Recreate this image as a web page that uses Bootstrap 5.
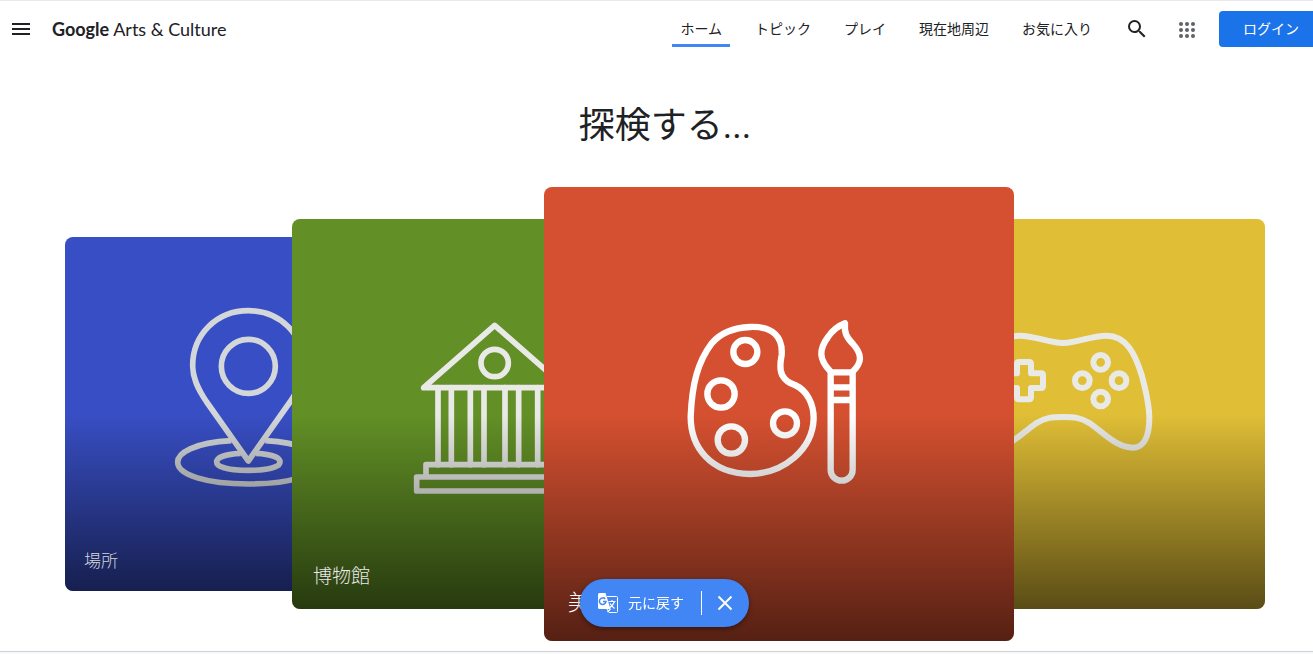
<!DOCTYPE html>
<html lang="ja">
<head>
<meta charset="utf-8">
<meta name="viewport" content="width=device-width, initial-scale=1">
<title>Google Arts &amp; Culture</title>
<link href="https://cdn.jsdelivr.net/npm/bootstrap@5.3.0/dist/css/bootstrap.min.css" rel="stylesheet">
<style>
  body { font-family: Roboto, "Noto Sans CJK JP", sans-serif; color: #202124; background: #fff; overflow-x: hidden; }
  .topbar { border-top: 1px solid #e8e8e8; height: 57px; }
  .icon-btn { width: 40px; height: 40px; color: #202124; border: 0; }
  .menu-btn { width: 42px; }
  .brand { font-family: Lato, sans-serif; font-size: 18px; line-height: 24px; color: #202124; margin-left: 10px; }
  .brand b { font-weight: 700; }
  .main-menu { gap: 17px; margin-right: 17px; }
  .main-menu .nav-link { font-size: 14px; line-height: 20px; font-weight: 400; color: #202124; padding: 8px 8px 5px; border-bottom: 3px solid transparent; white-space: nowrap; }
  .main-menu .nav-link.active { border-bottom-color: #4285f4; }
  .apps-btn { margin: 0 12px 0 10px; }
  .login { background: #1a73e8; color: #fff; font-size: 14px; line-height: 20px; padding: 8px 14px 8px 24px; border: 0; border-radius: 4px 0 0 4px; white-space: nowrap; }
  .login:hover { background: #1765cc; color: #fff; }
  .stage { padding: 45px 48px 10px 65px; }
  .stage h1 { font-size: 36px; line-height: 48px; font-weight: 400; margin-bottom: 37px; }
  /* The column lines are the edges of the overlapping cards. */
  .deck { display: grid; align-items: center; grid-template-columns: 227fr 139fr 113fr 152fr 165fr 153fr 251fr; }
  .tile { grid-row: 1; position: relative; border-radius: 8px; overflow: hidden; text-decoration: none; min-width: 0; display: flex; align-items: center; justify-content: center; }
  .tile svg { flex: none; fill: none; stroke: currentColor; stroke-linejoin: round; stroke-linecap: round; }
  .tile::after { content: ""; position: absolute; inset: 0; background: linear-gradient(transparent 50%, rgba(0, 0, 0, .6)); }
  .tile span { position: absolute; z-index: 1; white-space: nowrap; font-weight: 300; line-height: 24px; }
  .places { grid-column: 1 / 3; height: 354px; background: #384ec4; color: #d4d7d9; z-index: 1; }
  .places span { font-size: 17px; left: 19px; bottom: 18px; }
  .museums { grid-column: 2 / 5; height: 390px; background: #629026; color: #e9eae8; z-index: 2; }
  .museums span { font-size: 19px; left: 21px; bottom: 20px; }
  .art { grid-column: 4 / 7; height: 454px; background: #d55030; color: #fff; z-index: 3; }
  .art span { font-size: 22px; left: 24px; bottom: 26px; }
  .games { grid-column: 6 / 8; height: 390px; background: #e0be36; color: #e9eae6; z-index: 2; }
  .page-foot { background: #f8f9fa; border-top: 1px solid #d0d2d3; }
  .translate-bar { bottom: 27px; padding-left: 16px; pointer-events: none; }
  .translate-pill { pointer-events: auto; height: 48px; border-radius: 24px; background: #4285f4; color: #fff; padding: 0 12px 0 16px; box-shadow: 0 2px 5px rgba(0, 0, 0, .4); }
  .translate-pill button { background: none; border: 0; color: inherit; padding: 0; font-size: 14px; line-height: 24px; }
  .translate-pill .divider { width: 1px; height: 24px; background: #fff; margin: 0 11px 0 17px; }
</style>
</head>
<body class="d-flex flex-column min-vh-100">
<header class="topbar d-flex align-items-center">
  <button class="icon-btn menu-btn btn p-0 d-flex align-items-center justify-content-center" type="button" aria-label="メニュー">
    <svg width="18" height="12" viewBox="0 0 18 12" fill="currentColor"><path d="M0 0h18v2H0zM0 5h18v2H0zM0 10h18v2H0z"/></svg>
  </button>
  <a class="brand text-decoration-none text-nowrap" href="#"><b>Google</b> Arts &amp; Culture</a>
  <nav class="nav main-menu ms-auto flex-nowrap">
    <a class="nav-link active" aria-current="page" href="#">ホーム</a>
    <a class="nav-link" href="#">トピック</a>
    <a class="nav-link" href="#">プレイ</a>
    <a class="nav-link" href="#">現在地周辺</a>
    <a class="nav-link" href="#">お気に入り</a>
  </nav>
  <button class="icon-btn btn p-0" type="button" aria-label="検索">
    <svg width="24" height="24" viewBox="0 0 24 24" fill="currentColor"><path d="M15.500 14h-.79l-.28-.27A6.470 6.470 0 0 0 16 9.500 6.500 6.500 0 1 0 9.500 16c1.610 0 3.090-.59 4.230-1.570l.27.28v.79l5 4.990L20.490 19l-4.990-5zm-6 0C7.010 14 5 11.990 5 9.500S7.010 5 9.500 5 14 7.010 14 9.500 11.990 14 9.500 14z"/></svg>
  </button>
  <button class="icon-btn apps-btn btn p-0" type="button" aria-label="Google アプリ">
    <svg width="16" height="16" viewBox="0 0 16 16" fill="#5f6368"><circle cx="2" cy="2" r="2"/><circle cx="8" cy="2" r="2"/><circle cx="14" cy="2" r="2"/><circle cx="2" cy="8" r="2"/><circle cx="8" cy="8" r="2"/><circle cx="14" cy="8" r="2"/><circle cx="2" cy="14" r="2"/><circle cx="8" cy="14" r="2"/><circle cx="14" cy="14" r="2"/></svg>
  </button>
  <button class="login btn" type="button">ログイン</button>
</header>

<main class="stage">
  <h1 class="text-center">探検する...</h1>
  <div class="deck">
    <a class="tile places" href="#">
      <svg width="170" height="234" viewBox="309 21 510 702" stroke-width="17" aria-hidden="true">
        <circle cx="565" cy="229" r="81"/>
        <path d="M565 513 440 336C412 294 398 263 398 227 398 134 470 62 565 62S732 134 732 227C732 263 718 294 690 336Z"/>
        <path stroke-linecap="butt" d="M514 452C400 458 353 490 353 516 353 555 440 582 565 582S777 555 777 516C777 490 730 458 616 452"/>
        <path stroke-linecap="butt" d="M542 490C495 492 470 503 470 516 470 532 510 541 565 541S660 532 660 516C660 503 635 492 588 490"/>
      </svg>
      <span>場所</span>
    </a>
    <a class="tile museums" href="#">
      <svg width="170" height="210" viewBox="357 27 510 630" stroke-width="17" aria-hidden="true">
        <path d="M401 263 614 76 827 263Z"/>
        <circle cx="614" cy="189" r="41"/>
        <path d="M444 263V494M484 263V494M541 263V494M582 263V494M645 263V494M686 263V494M743 263V494M784 263V494"/>
        <path d="M408 531V494H820V531M380 531H848V573H380Z"/>
      </svg>
      <span>博物館</span>
    </a>
    <a class="tile art" href="#">
      <svg width="218" height="200" viewBox="0 42 654 600" stroke-width="19" aria-hidden="true">
        <path d="M240 81C310 78 339 112 335 165 330 190 328 210 337 226 348 245 360 249 375 255 412 272 431 312 431 355 428 450 340 520 240 522 120 520 62 440 62 350 66 250 84 185 125 130 155 95 195 83 240 81Z"/>
        <circle cx="226" cy="156" r="36"/><circle cx="153" cy="282" r="41"/><circle cx="184" cy="420" r="41"/><circle cx="345" cy="370" r="36"/>
        <path d="M482 217V509A33 33 0 0 0 548 509V217ZM482 262H548M482 300H548"/>
        <path d="M482 215C446 178 446 149 474 111 487 92 504 78 525 70 522 98 530 113 549 132 577 163 577 187 548 215"/>
      </svg>
      <span>美術</span>
    </a>
    <a class="tile games" href="#" aria-label="ゲーム">
      <svg width="180" height="200" viewBox="-81 12 540 600" stroke-width="18" aria-hidden="true">
        <path d="M189 99C235 99 270 77 320 77 378 77 405 130 425 195 440 250 448 290 448 325 448 382 430 413 400 413 350 413 315 372 270 340 240 322 220 321 189 321S138 322 108 340C63 372 28 413-22 413-52 413-70 382-70 325-70 290-62 250-47 195-27 130 0 77 58 77 108 77 143 99 189 99Z"/>
        <circle cx="302" cy="157" r="22"/><circle cx="247" cy="212" r="22"/><circle cx="357" cy="212" r="22"/><circle cx="302" cy="267" r="22"/>
        <path d="M57 156H87Q93 156 93 162V190H123Q129 190 129 196V228Q129 234 123 234H93V262Q93 268 87 268H57Q51 268 51 262V234H15V190H51V162Q51 156 57 156Z"/>
      </svg>
    </a>
  </div>
</main>

<footer class="page-foot flex-grow-1"></footer>

<div class="translate-bar position-fixed start-0 end-0 d-flex justify-content-center z-3">
  <div class="translate-pill d-flex align-items-center">
    <button type="button" class="d-flex align-items-center gap-2">
      <svg width="24" height="24" viewBox="0 0 24 24" aria-hidden="true">
        <path fill="none" stroke="#fff" d="M11 5.500H20.500Q21.500 5.500 21.500 6.500V20.500Q21.500 21.500 20.500 21.500H13L11 18"/>
        <path fill="#fff" d="M3.500 2H9.500L14.500 18H3.500Q2 18 2 16.500V3.500Q2 2 3.500 2Z"/>
        <path fill="none" stroke="#4285f4" stroke-width="1.500" d="M9.200 8A3.300 3.300 0 1 0 10 10.500H7"/>
        <path fill="none" stroke="#fff" stroke-width="1.200" d="M12.500 10.500H19.500M16 9V10.500M18.500 10.500Q17.500 14 13.500 17M14 12.500Q16 15.500 18.500 17.500M11.500 21 14.500 18"/>
      </svg>
      <span>元に戻す</span>
    </button>
    <span class="divider"></span>
    <button type="button" class="d-flex" aria-label="閉じる">
      <svg width="24" height="24" viewBox="0 0 24 24" fill="none" stroke="currentColor" stroke-width="2"><path d="M5.500 5.500 18.500 18.500M18.500 5.500 5.500 18.500"/></svg>
    </button>
  </div>
</div>
<script src="https://cdn.jsdelivr.net/npm/bootstrap@5.3.0/dist/js/bootstrap.bundle.min.js"></script>
</body>
</html>
